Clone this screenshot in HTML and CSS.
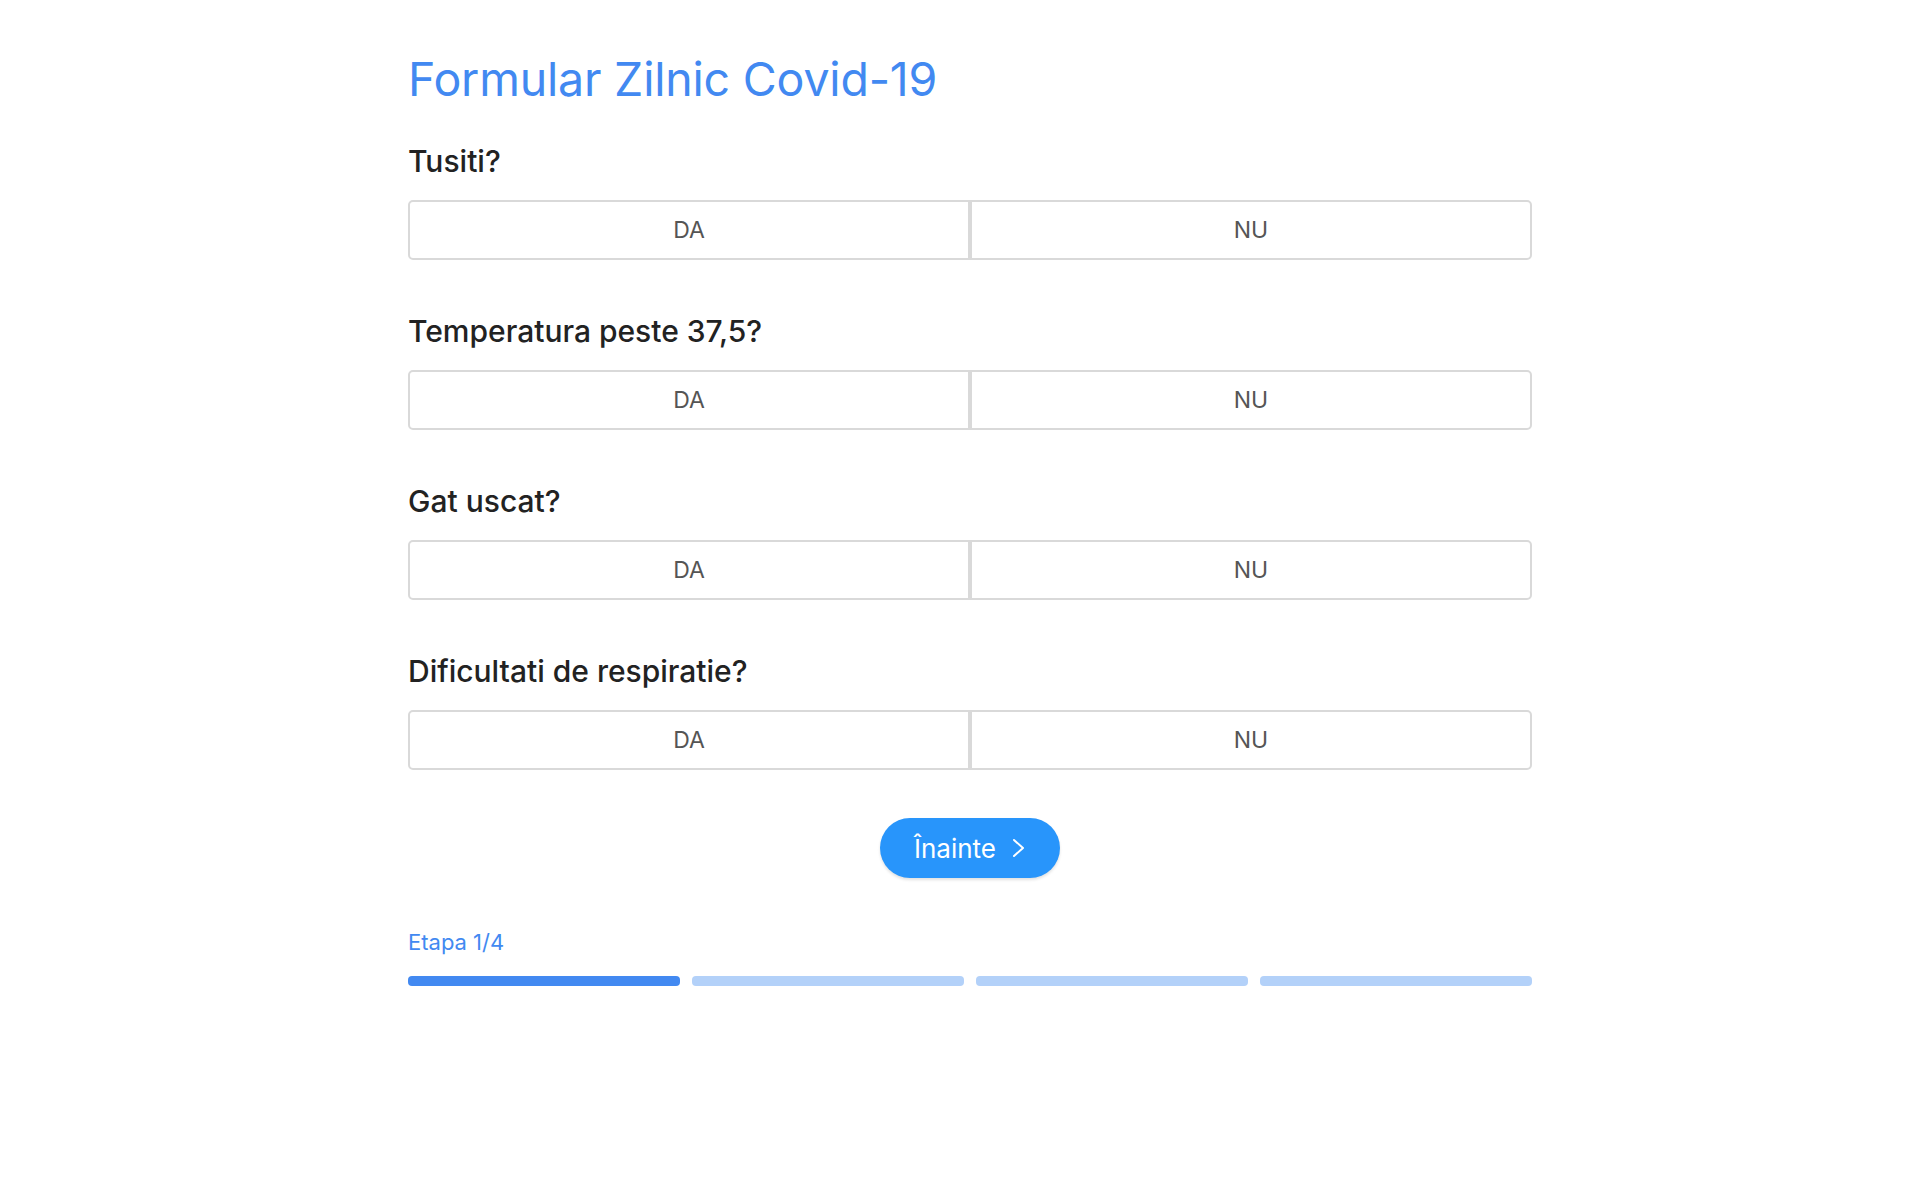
FILE: index.html
```html
<!DOCTYPE html>
<html lang="ro">
<head>
<meta charset="utf-8">
<title>Formular Zilnic Covid-19</title>
<link rel="stylesheet" href="styles.css">
</head>
<body>
<main class="page">
  <h1 class="title">Formular Zilnic Covid-19</h1>

  <section class="question">
    <h2 class="label">Tusiti?</h2>
    <div class="segment">
      <button class="seg-btn">DA</button>
      <button class="seg-btn">NU</button>
    </div>
  </section>

  <section class="question">
    <h2 class="label">Temperatura peste 37,5?</h2>
    <div class="segment">
      <button class="seg-btn">DA</button>
      <button class="seg-btn">NU</button>
    </div>
  </section>

  <section class="question">
    <h2 class="label">Gat uscat?</h2>
    <div class="segment">
      <button class="seg-btn">DA</button>
      <button class="seg-btn">NU</button>
    </div>
  </section>

  <section class="question">
    <h2 class="label">Dificultati de respiratie?</h2>
    <div class="segment">
      <button class="seg-btn">DA</button>
      <button class="seg-btn">NU</button>
    </div>
  </section>

  <div class="actions">
    <button class="next">
      <span>Înainte</span>
      <svg class="chev" width="14" height="20" viewBox="0 0 14 20" aria-hidden="true">
        <path d="M2 2 L11 10 L2 18" fill="none" stroke="#fff" stroke-width="2" stroke-linecap="round" stroke-linejoin="round"/>
      </svg>
    </button>
  </div>

  <div class="step">Etapa 1/4</div>
  <div class="progress">
    <div class="bar bar-on"></div>
    <div class="bar"></div>
    <div class="bar"></div>
    <div class="bar"></div>
  </div>
</main>
</body>
</html>
```

FILE: styles.css
```css
* { box-sizing: border-box; }

html, body {
  margin: 0;
  padding: 0;
  background: #ffffff;
}

body {
  font-family: Inter, "Noto Sans", "Liberation Sans", sans-serif;
  color: #222222;
}

.page {
  width: 1148px;
  margin: 0 auto;
  padding: 49px 0 0 24px;
}

.title {
  margin: 0;
  font-size: 46.5px;
  line-height: 60px;
  font-weight: 400;
  color: #4289f1;
  letter-spacing: -0.2px;
}

.question {
  display: flex;
  flex-direction: column;
}

.question:first-of-type {
  margin-top: 35px;
}

.question + .question {
  margin-top: 54px;
}

.label {
  margin: 0 0 22px 0;
  font-size: 30px;
  line-height: 34px;
  font-weight: 500;
  color: #222222;
}

.segment {
  display: grid;
  grid-template-columns: 1fr 1fr;
  height: 60px;
}

.seg-btn {
  font-family: inherit;
  font-size: 23px;
  color: #555555;
  background: #ffffff;
  border: 2px solid #d9d9d9;
  margin: 0;
  padding: 0;
  cursor: pointer;
}

.seg-btn:first-child {
  border-radius: 5px 0 0 5px;
}

.seg-btn:last-child {
  border-radius: 0 5px 5px 0;
}

.actions {
  display: flex;
  justify-content: center;
  margin-top: 48px;
}

.next {
  display: flex;
  align-items: center;
  justify-content: center;
  gap: 16px;
  width: 180px;
  height: 60px;
  border: none;
  border-radius: 30px;
  background: #2895fb;
  color: #ffffff;
  font-family: inherit;
  font-size: 26px;
  padding: 0 0 0 0;
  box-shadow: 0 2px 3px rgba(0, 0, 0, 0.12);
  cursor: pointer;
}

.chev {
  display: block;
}

.step {
  margin-top: 52px;
  font-size: 22px;
  line-height: 24px;
  color: #4289f1;
}

.progress {
  display: grid;
  grid-template-columns: repeat(4, 1fr);
  gap: 12px;
  margin-top: 22px;
  width: 1124px;
}

.bar {
  height: 10px;
  border-radius: 4px;
  background: #b3d1f9;
}

.bar-on {
  background: #4289f1;
}
```
